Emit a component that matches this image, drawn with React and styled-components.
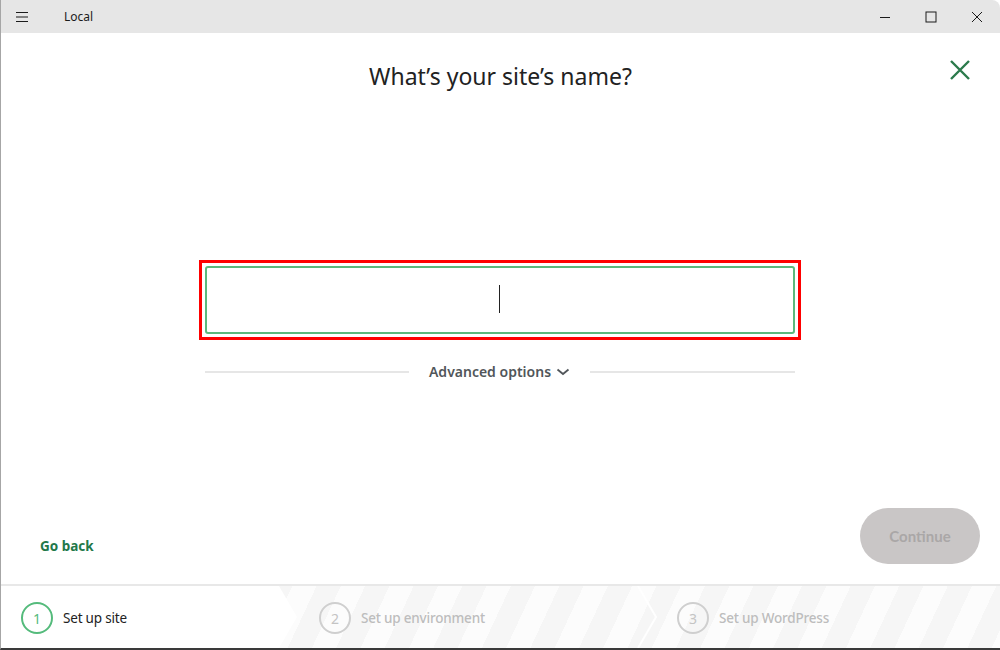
import styled, { createGlobalStyle } from "styled-components";

const GlobalStyle = createGlobalStyle`
	html, body {
		margin: 0;
		padding: 0;
		background: #ffffff;
	}
	body {
		font-family: "Noto Sans", "Open Sans", sans-serif;
	}
`;

const steps = [
	{ n: 1, label: "Set up site", active: true, width: 296, pad: 20 },
	{ n: 2, label: "Set up environment", active: false, width: 359, pad: 22, divider: true },
	{ n: 3, label: "Set up WordPress", active: false, width: 345, pad: 21 },
];

const App = () => {
	return (
		<>
			<GlobalStyle />
			<Window>
				<TitleBar>
					<MenuButton>
						<svg width="14" height="12" viewBox="0 0 14 12">
							<path d="M1 1.5h12M1 6h12M1 10.5h12" stroke="#1b1b1b" strokeWidth="1.1" />
						</svg>
					</MenuButton>
					<AppName>Local</AppName>
					<WinControls>
						<WinButton>
							<svg width="12" height="12" viewBox="0 0 12 12">
								<path d="M1 6.5h10" stroke="#1b1b1b" strokeWidth="1" />
							</svg>
						</WinButton>
						<WinButton>
							<svg width="12" height="12" viewBox="0 0 12 12">
								<rect x="1" y="1" width="10" height="10" fill="none" stroke="#1b1b1b" strokeWidth="1" />
							</svg>
						</WinButton>
						<WinButton>
							<svg width="12" height="12" viewBox="0 0 12 12">
								<path d="M1 1l10 10M11 1L1 11" stroke="#1b1b1b" strokeWidth="1" />
							</svg>
						</WinButton>
					</WinControls>
				</TitleBar>

				<Main>
					<Header>
						<span />
						<Title>What’s your site’s name?</Title>
						<CloseButton>
							<svg width="22" height="22" viewBox="0 0 22 22">
								<path d="M2 2l18 18M20 2L2 20" stroke="#2b7a4b" strokeWidth="2.4" />
							</svg>
						</CloseButton>
					</Header>

					<Form>
						<Highlight>
							<NameInput />
							<Caret />
						</Highlight>
						<Advanced>
							<Rule />
							<AdvancedLabel>
								Advanced options
								<svg width="14" height="8" viewBox="0 0 14 8">
									<path d="M1.5 1.5L7 6l5.5-4.5" fill="none" stroke="#51565a" strokeWidth="1.8" />
								</svg>
							</AdvancedLabel>
							<Rule />
						</Advanced>
					</Form>

					<Actions>
						<GoBack>Go back</GoBack>
						<ContinueButton disabled>Continue</ContinueButton>
					</Actions>
				</Main>

				<StepBar>
					{steps.map((s) => (
						<Step key={s.n} $active={s.active} $width={s.width} $pad={s.pad}>
							<StepCircle $active={s.active}>{s.n}</StepCircle>
							<StepLabel $active={s.active}>{s.label}</StepLabel>
							{s.divider && (
								<Divider width="22" height="62" viewBox="0 0 22 62">
									<path d="M2 0L20 31L2 62" fill="none" stroke="#ffffff" strokeWidth="2" />
								</Divider>
							)}
						</Step>
					))}
				</StepBar>
			</Window>
		</>
	);
};

const Window = styled.div`
	width: 1000px;
	height: 650px;
	box-sizing: border-box;
	display: flex;
	flex-direction: column;
	background: #ffffff;
	border-left: 1px solid #a6a6a6;
	border-bottom: 2px solid #3a3a3a;
	border-top-right-radius: 8px;
	overflow: hidden;
`;

const TitleBar = styled.div`
	height: 33px;
	flex-shrink: 0;
	display: flex;
	align-items: center;
	background: #e6e6e6;
`;

const MenuButton = styled.div`
	width: 44px;
	display: flex;
	justify-content: center;
	margin-left: -1px;
`;

const AppName = styled.div`
	margin-left: 20px;
	font-size: 12px;
	color: #1b1b1b;
`;

const WinControls = styled.div`
	margin-left: auto;
	display: flex;
	height: 100%;
`;

const WinButton = styled.div`
	width: 46px;
	display: flex;
	align-items: center;
	justify-content: center;
`;

const Main = styled.div`
	flex: 1;
	display: flex;
	flex-direction: column;
	align-items: center;
`;

const Header = styled.div`
	width: 100%;
	box-sizing: border-box;
	display: grid;
	grid-template-columns: 1fr auto 1fr;
	align-items: center;
	padding: 27px 29px 0 29px;
`;

const Title = styled.h1`
	margin: 0;
	font-size: 23px;
	font-weight: 400;
	color: #222222;
	line-height: 32px;
`;

const CloseButton = styled.div`
	justify-self: end;
	display: flex;
	margin-top: -12px;
`;

const Form = styled.div`
	width: 602px;
	margin-top: 168px;
	margin-left: -2px;
	display: flex;
	flex-direction: column;
	align-items: center;
`;

const Highlight = styled.div`
	position: relative;
	width: 100%;
	box-sizing: border-box;
	border: 3px solid #ff0000;
	padding: 3px;
`;

const NameInput = styled.input`
	display: block;
	width: 100%;
	height: 68px;
	box-sizing: border-box;
	border: 2px solid #5cb87c;
	border-radius: 3px;
	outline: none;
	text-align: center;
	font-size: 22px;
	font-family: "Noto Sans", sans-serif;
	color: #222222;
`;

const Caret = styled.span`
	position: absolute;
	left: 297px;
	top: 22px;
	width: 1px;
	height: 28px;
	background: #222222;
`;

const Advanced = styled.div`
	width: 590px;
	margin-top: 22px;
	display: flex;
	align-items: center;
	gap: 20px;
`;

const Rule = styled.div`
	flex: 1;
	height: 2px;
	background: #e6e6e6;
`;

const AdvancedLabel = styled.div`
	display: flex;
	align-items: center;
	gap: 5px;
	font-size: 14px;
	font-weight: 600;
	color: #51565a;
	line-height: 20px;
`;

const Actions = styled.div`
	margin-top: auto;
	width: 100%;
	box-sizing: border-box;
	display: flex;
	align-items: center;
	justify-content: space-between;
	padding: 0 20px 20px 39px;
`;

const GoBack = styled.div`
	padding-top: 20px;
	font-size: 13.5px;
	font-weight: 700;
	color: #22784a;
	cursor: pointer;
`;

const ContinueButton = styled.button`
	width: 120px;
	height: 56px;
	border: none;
	border-radius: 28px;
	background: #c9c6c6;
	color: #aaa7a7;
	font-family: "Lato", "Noto Sans", sans-serif;
	font-size: 15px;
	font-weight: 700;
`;

const StepBar = styled.div`
	height: 62px;
	flex-shrink: 0;
	display: flex;
	border-top: 2px solid #e8e8e8;
	background: repeating-linear-gradient(
		115deg,
		#fcfcfc 0 22px,
		#f6f6f6 22px 44px
	);
`;

const Step = styled.div`
	position: relative;
	width: ${(p) => p.$width}px;
	flex-shrink: 0;
	box-sizing: border-box;
	display: flex;
	align-items: center;
	gap: 10px;
	padding-left: ${(p) => p.$pad}px;
	padding-top: 2px;
	background: ${(p) => (p.$active ? "#ffffff" : "transparent")};
	clip-path: ${(p) =>
		p.$active
			? "polygon(0 0, calc(100% - 18px) 0, 100% 50%, calc(100% - 18px) 100%, 0 100%)"
			: "none"};
`;

const StepCircle = styled.div`
	width: 32px;
	height: 32px;
	box-sizing: border-box;
	border-radius: 50%;
	border: 2px solid ${(p) => (p.$active ? "#55bb7c" : "#cfcfcf")};
	color: ${(p) => (p.$active ? "#55bb7c" : "#c4c4c4")};
	display: flex;
	align-items: center;
	justify-content: center;
	font-size: 14px;
`;

const StepLabel = styled.div`
	font-size: 13.5px;
	color: ${(p) => (p.$active ? "#222222" : "#bdbdbd")};
	font-weight: ${(p) => (p.$active ? 400 : 500)};
	letter-spacing: -0.2px;
`;

const Divider = styled.svg`
	position: absolute;
	right: -2px;
	top: 0;
`;

export default App;
